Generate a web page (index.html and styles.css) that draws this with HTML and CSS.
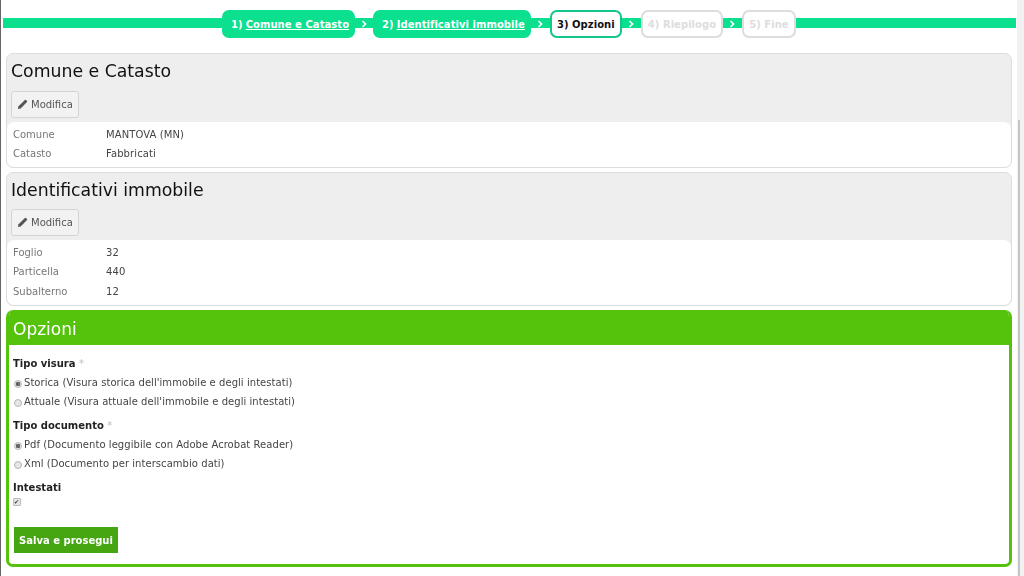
FILE: index.html
```html
<!DOCTYPE html>
<html lang="it">
<head>
<meta charset="utf-8">
<title>Opzioni</title>
<link rel="stylesheet" href="styles.css">
</head>
<body>
<div class="page">
  <nav class="steps">
    <div class="line"></div>
    <div class="step-row">
      <span class="step done"><b>1)</b> <a href="#">Comune e Catasto</a></span>
      <span class="arrow first"><svg viewBox="0 0 7 8"><path d="M1.500 1l3 3-3 3"/></svg></span>
      <span class="step done"><b>2)</b> <a href="#">Identificativi immobile</a></span>
      <span class="arrow"><svg viewBox="0 0 7 8"><path d="M1.500 1l3 3-3 3"/></svg></span>
      <span class="step current">3) Opzioni</span>
      <span class="arrow"><svg viewBox="0 0 7 8"><path d="M1.500 1l3 3-3 3"/></svg></span>
      <span class="step todo">4) Riepilogo</span>
      <span class="arrow"><svg viewBox="0 0 7 8"><path d="M1.500 1l3 3-3 3"/></svg></span>
      <span class="step todo">5) Fine</span>
    </div>
  </nav>

  <section class="panel">
    <header class="panel-head">
      <h2>Comune e Catasto</h2>
      <button class="edit"><svg class="pencil" viewBox="0 0 12 12"><path d="M1 11l.7-3L8.600 1.100a.8.8 0 0 1 1.100 0l1.200 1.200a.8.8 0 0 1 0 1.100L4 10.300z"/></svg>Modifica</button>
    </header>
    <dl class="data">
      <div class="row"><dt>Comune</dt><dd>MANTOVA (MN)</dd></div>
      <div class="row"><dt>Catasto</dt><dd>Fabbricati</dd></div>
    </dl>
  </section>

  <section class="panel compact">
    <header class="panel-head">
      <h2>Identificativi immobile</h2>
      <button class="edit"><svg class="pencil" viewBox="0 0 12 12"><path d="M1 11l.7-3L8.600 1.100a.8.8 0 0 1 1.100 0l1.200 1.200a.8.8 0 0 1 0 1.100L4 10.300z"/></svg>Modifica</button>
    </header>
    <dl class="data">
      <div class="row"><dt>Foglio</dt><dd>32</dd></div>
      <div class="row"><dt>Particella</dt><dd>440</dd></div>
      <div class="row"><dt>Subalterno</dt><dd>12</dd></div>
    </dl>
  </section>

  <section class="options">
    <h2>Opzioni</h2>
    <form class="options-body">
      <div class="group">
        <div class="label">Tipo visura <i>*</i></div>
        <label class="choice"><input type="radio" name="v" checked>Storica (Visura storica dell'immobile e degli intestati)</label>
        <label class="choice"><input type="radio" name="v">Attuale (Visura attuale dell'immobile e degli intestati)</label>
      </div>
      <div class="group">
        <div class="label">Tipo documento <i>*</i></div>
        <label class="choice"><input type="radio" name="d" checked>Pdf (Documento leggibile con Adobe Acrobat Reader)</label>
        <label class="choice"><input type="radio" name="d">Xml (Documento per interscambio dati)</label>
      </div>
      <div class="group">
        <div class="label">Intestati</div>
        <input class="check" type="checkbox" checked>
      </div>
      <button class="save" type="button">Salva e prosegui</button>
    </form>
  </section>
</div>
<div class="scrollbar"><div class="thumb"></div></div>
</body>
</html>
```
FILE: styles.css
```css
* { box-sizing: border-box; }
html, body { margin: 0; height: 576px; overflow: hidden; background: #fff; }
body {
  display: flex;
  font-family: "DejaVu Sans", Verdana, sans-serif;
  font-size: 10px;
  color: #333;
  border-left: 1px solid #666;
}
.page { flex: 1; min-width: 0; padding-left: 5px; filter: blur(0.3px); }
.scrollbar { width: 7px; background: #f1f1f1; padding: 120px 0 0 1px; }
.thumb { width: 2px; height: 456px; background: #c4c4c4; }

.steps { position: relative; height: 53px; margin-left: -5px; padding: 10px 0 0 221px; }
.line { position: absolute; left: 2px; right: 1px; top: 18px; height: 10px; background: #0be08f; }
.step-row { position: relative; display: flex; align-items: flex-start; }
.step {
  height: 28px;
  display: flex;
  align-items: center;
  gap: 3px;
  border-radius: 7px;
  font-size: 10px;
  font-weight: bold;
  white-space: pre;
  letter-spacing: 0.05px;
}
.step b { font-weight: bold; }
.done { background: #0be08f; color: #fff; padding: 0 6px 0 9px; }
.done a { color: #fff; }
.current { background: #fff; border: 2px solid #12c787; color: #111; padding: 0 5px; }
.todo { background: #fff; border: 2px solid #ddd; color: #ddd; padding: 0 5px; }
.arrow { display: flex; justify-content: center; width: 19px; height: 8px; margin-top: 10px; }
.arrow.first { width: 18px; }
.arrow svg { width: 7px; height: 8px; fill: none; stroke: #fff; stroke-width: 1.700; }

.panel {
  width: 1006px;
  margin-bottom: 4px;
  border: 1px solid #ddd;
  border-radius: 7px;
  overflow: hidden;
  background: #eee;
}
.panel-head { height: 68px; padding: 5px 4px 0; }
.panel-head h2 { margin: 0 0 7px; font-size: 17.3px; font-weight: normal; line-height: 25px; color: #111; }
.compact .panel-head { height: 67px; }
.compact .panel-head h2 { margin-bottom: 6px; }
.compact .row:last-child { margin-top: 1px; }
.edit {
  display: flex;
  align-items: center;
  gap: 3px;
  width: 68px;
  height: 27px;
  padding: 0 0 0 5px;
  background: #f2f2f2;
  border: 1px solid #d4d4d4;
  border-radius: 3px;
  font-family: inherit;
  font-size: 10px;
  color: #555;
}
.pencil { width: 11px; height: 11px; fill: #555; }
.data { margin: 0; padding: 3px 6px 4px; background: #fff; border-radius: 7px; }
.row { display: flex; height: 19px; align-items: center; }
.row dt { width: 93px; color: #777; }
.row dd { margin: 0; color: #444; letter-spacing: 0.1px; }

.options {
  width: 1006px;
  height: 257px;
  border: 3px solid #55c20b;
  border-top: 0;
  border-radius: 7px;
  overflow: hidden;
}
.options h2 {
  margin: 0 -3px;
  height: 35px;
  padding-left: 7px;
  background: #55c20b;
  color: #fff;
  font-size: 17px;
  font-weight: normal;
  line-height: 38px;
}
.options-body { padding: 9px 4px 0; }
.group { margin-bottom: 5px; }
.label { height: 19px; line-height: 19px; font-weight: bold; color: #222; }
.label i { color: #bbb; font-style: normal; font-weight: normal; }
.choice { display: flex; align-items: center; height: 19px; color: #444; letter-spacing: 0.05px; }
.choice input {
  appearance: none;
  flex: none;
  width: 8px;
  height: 8px;
  margin: 2px 2px 0 1px;
  border: 1px solid #b5b5b5;
  border-radius: 50%;
  background: #e6e6e6;
}
.choice input:checked { background: radial-gradient(circle, #666 0 2px, #e6e6e6 2.5px); }
.check {
  appearance: none;
  display: block;
  position: relative;
  width: 8px;
  height: 8px;
  margin: 1px 0 0 0;
  border: 1px solid #bbb;
  border-radius: 1px;
  background: #e6e6e6;
}
.check:checked::after {
  content: "\2714";
  position: absolute;
  left: 0;
  top: -1px;
  font-size: 6px;
  line-height: 8px;
  color: #333;
}
.save {
  display: block;
  margin: 21px 0 0 1px;
  width: 104px;
  height: 26px;
  padding: 0;
  background: #45a612;
  border: 0;
  color: #fff;
  font-family: inherit;
  font-size: 10px;
  font-weight: bold;
}
```
